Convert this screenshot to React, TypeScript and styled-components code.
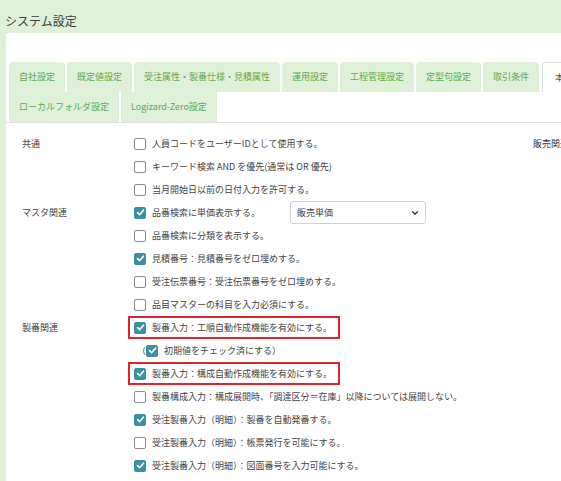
import React from 'react'
import styled, { createGlobalStyle } from 'styled-components'

const GlobalStyle = createGlobalStyle`
  html, body {
    margin: 0;
    padding: 0;
    background: #fff;
  }
  body {
    font-family: "Noto Sans CJK JP", "Noto Sans", sans-serif;
    color: #444;
    overflow: hidden;
  }
`

const Frame = styled.div`
  height: 481px;
  background: #dff0d8;
  display: flex;
  flex-direction: column;
  overflow: hidden;
`

const Header = styled.header`
  height: 33px;
  box-sizing: border-box;
  padding: 13px 0 0 5px;
  font-size: 12px;
  line-height: 16px;
  color: #3c3c3c;
`

const Panel = styled.main`
  flex: 1;
  margin-left: 6px;
  background: #fff;
  padding-top: 29px;
  overflow: hidden;
`

const TabBar = styled.nav`
  padding-left: 3px;
  border-bottom: 1px solid #e2e2e2;
`

const TabRow = styled.div`
  display: flex;
  gap: 2px;
  white-space: nowrap;
`

const Tab = styled.div<{ $active?: boolean; $top?: boolean }>`
  flex: none;
  box-sizing: border-box;
  height: 30px;
  line-height: 30px;
  padding: ${p => (p.$active ? '0 10px 0 12px' : '0 10px')};
  font-size: 9px;
  background: ${p => (p.$active ? '#fff' : '#dff0d8')};
  color: ${p => (p.$active ? '#555' : '#5cad4f')};
  border-radius: ${p => (p.$top ? '4px 4px 0 0' : '0')};
  border: ${p => (p.$active ? '1px solid #ddd' : 'none')};
  border-bottom: none;
  margin-left: ${p => (p.$active ? '1px' : '0')};
`

const Body = styled.div`
  display: flex;
  padding: 9px 0 0 16px;
  white-space: nowrap;
`

const Settings = styled.div`
  flex: none;
  width: 511px;
  display: grid;
  grid-template-columns: 112px 1fr;
  align-items: start;
`

const SideColumn = styled.div`
  flex: none;
  font-size: 9px;
  line-height: 23px;
  color: #333;
`

const GroupLabel = styled.div`
  font-size: 9px;
  line-height: 23px;
  color: #444;
`

const Options = styled.div`
  display: flex;
  flex-direction: column;
`

const Row = styled.div`
  height: 23px;
  display: flex;
  align-items: center;
  font-size: 9px;
  color: #444;
`

const Highlight = styled.div`
  box-sizing: border-box;
  height: 23px;
  display: inline-flex;
  align-items: center;
  align-self: flex-start;
  margin-left: -6px;
  padding: 0 6px 0 4px;
  border: 2px solid #e3232a;
  font-size: 9px;
  color: #444;
`

const SubRow = styled(Row)`
  padding-left: 3px;
`

const Paren = styled.span`
  font-size: 9px;
  color: #444;
`

const Box = styled.span<{ $checked?: boolean }>`
  flex: none;
  box-sizing: border-box;
  width: 12px;
  height: 12px;
  margin-right: 6px;
  border-radius: 2px;
  border: 1px solid ${p => (p.$checked ? '#3a8fa2' : '#8a8a8a')};
  background: ${p => (p.$checked ? '#3a8fa2' : '#fff')};
  display: flex;
  align-items: center;
  justify-content: center;
`

const SelectBox = styled.div`
  box-sizing: border-box;
  width: 136px;
  height: 23px;
  margin-left: 30px;
  padding: 0 6px;
  border: 1px solid #d0d0d0;
  border-radius: 3px;
  display: flex;
  align-items: center;
  justify-content: space-between;
  font-size: 9px;
  color: #444;
`

const Check = ({ checked }: { checked?: boolean }) => (
  <Box $checked={checked}>
    {checked && (
      <svg width="9" height="9" viewBox="0 0 10 10">
        <path d="M1.8 5.2 L4 7.4 L8.3 2.4" fill="none" stroke="#fff" strokeWidth="1.8" strokeLinecap="round" strokeLinejoin="round" />
      </svg>
    )}
  </Box>
)

const Chevron = () => (
  <svg width="8" height="8" viewBox="0 0 10 10">
    <path d="M2 3.5 L5 6.5 L8 3.5" fill="none" stroke="#333" strokeWidth="1.6" strokeLinecap="round" strokeLinejoin="round" />
  </svg>
)

interface Option {
  text: string;
  checked?: boolean;
}

const topTabs = ['自社設定', '既定値設定', '受注属性・製番仕様・見積属性', '運用設定', '工程管理設定', '定型句設定', '取引条件']
const bottomTabs = ['ローカルフォルダ設定', 'Logizard-Zero設定']

const commonOptions: Option[] = [
  { text: '人員コードをユーザーIDとして使用する。' },
  { text: 'キーワード検索 AND を優先(通常は OR 優先)' },
  { text: '当月開始日以前の日付入力を許可する。' },
]

const masterOptions: Option[] = [
  { text: '品番検索に分類を表示する。' },
  { text: '見積番号：見積番号をゼロ埋めする。', checked: true },
  { text: '受注伝票番号：受注伝票番号をゼロ埋めする。' },
  { text: '品目マスターの科目を入力必須にする。' },
]

const lotOptions: Option[] = [
  { text: '製番構成入力：構成展開時、「調達区分＝在庫」以降については展開しない。' },
  { text: '受注製番入力（明細）：製番を自動発番する。', checked: true },
  { text: '受注製番入力（明細）：帳票発行を可能にする。' },
  { text: '受注製番入力（明細）：図面番号を入力可能にする。', checked: true },
]

const App = () => {
  return (
    <>
      <GlobalStyle />
      <Frame>
        <Header>システム設定</Header>
        <Panel>
          <TabBar>
            <TabRow>
              {topTabs.map(t => (
                <Tab key={t} $top>{t}</Tab>
              ))}
              <Tab $top $active>本支店設定</Tab>
            </TabRow>
            <TabRow>
              {bottomTabs.map(t => (
                <Tab key={t}>{t}</Tab>
              ))}
            </TabRow>
          </TabBar>

          <Body>
            <Settings>
              <GroupLabel>共通</GroupLabel>
              <Options>
                {commonOptions.map(o => (
                  <Row key={o.text}>
                    <Check checked={o.checked} />
                    {o.text}
                  </Row>
                ))}
              </Options>

              <GroupLabel>マスタ関連</GroupLabel>
              <Options>
                <Row>
                  <Check checked />
                  品番検索に単価表示する。
                  <SelectBox>
                    販売単価
                    <Chevron />
                  </SelectBox>
                </Row>
                {masterOptions.map(o => (
                  <Row key={o.text}>
                    <Check checked={o.checked} />
                    {o.text}
                  </Row>
                ))}
              </Options>

              <GroupLabel>製番関連</GroupLabel>
              <Options>
                <Highlight>
                  <Check checked />
                  製番入力：工順自動作成機能を有効にする。
                </Highlight>
                <SubRow>
                  <Paren>（</Paren>
                  <Check checked />
                  初期値をチェック済にする
                  <Paren>）</Paren>
                </SubRow>
                <Highlight>
                  <Check checked />
                  製番入力：構成自動作成機能を有効にする。
                </Highlight>
                {lotOptions.map(o => (
                  <Row key={o.text}>
                    <Check checked={o.checked} />
                    {o.text}
                  </Row>
                ))}
              </Options>
            </Settings>
            <SideColumn>販売関連</SideColumn>
          </Body>
        </Panel>
      </Frame>
    </>
  )
}

export default App
